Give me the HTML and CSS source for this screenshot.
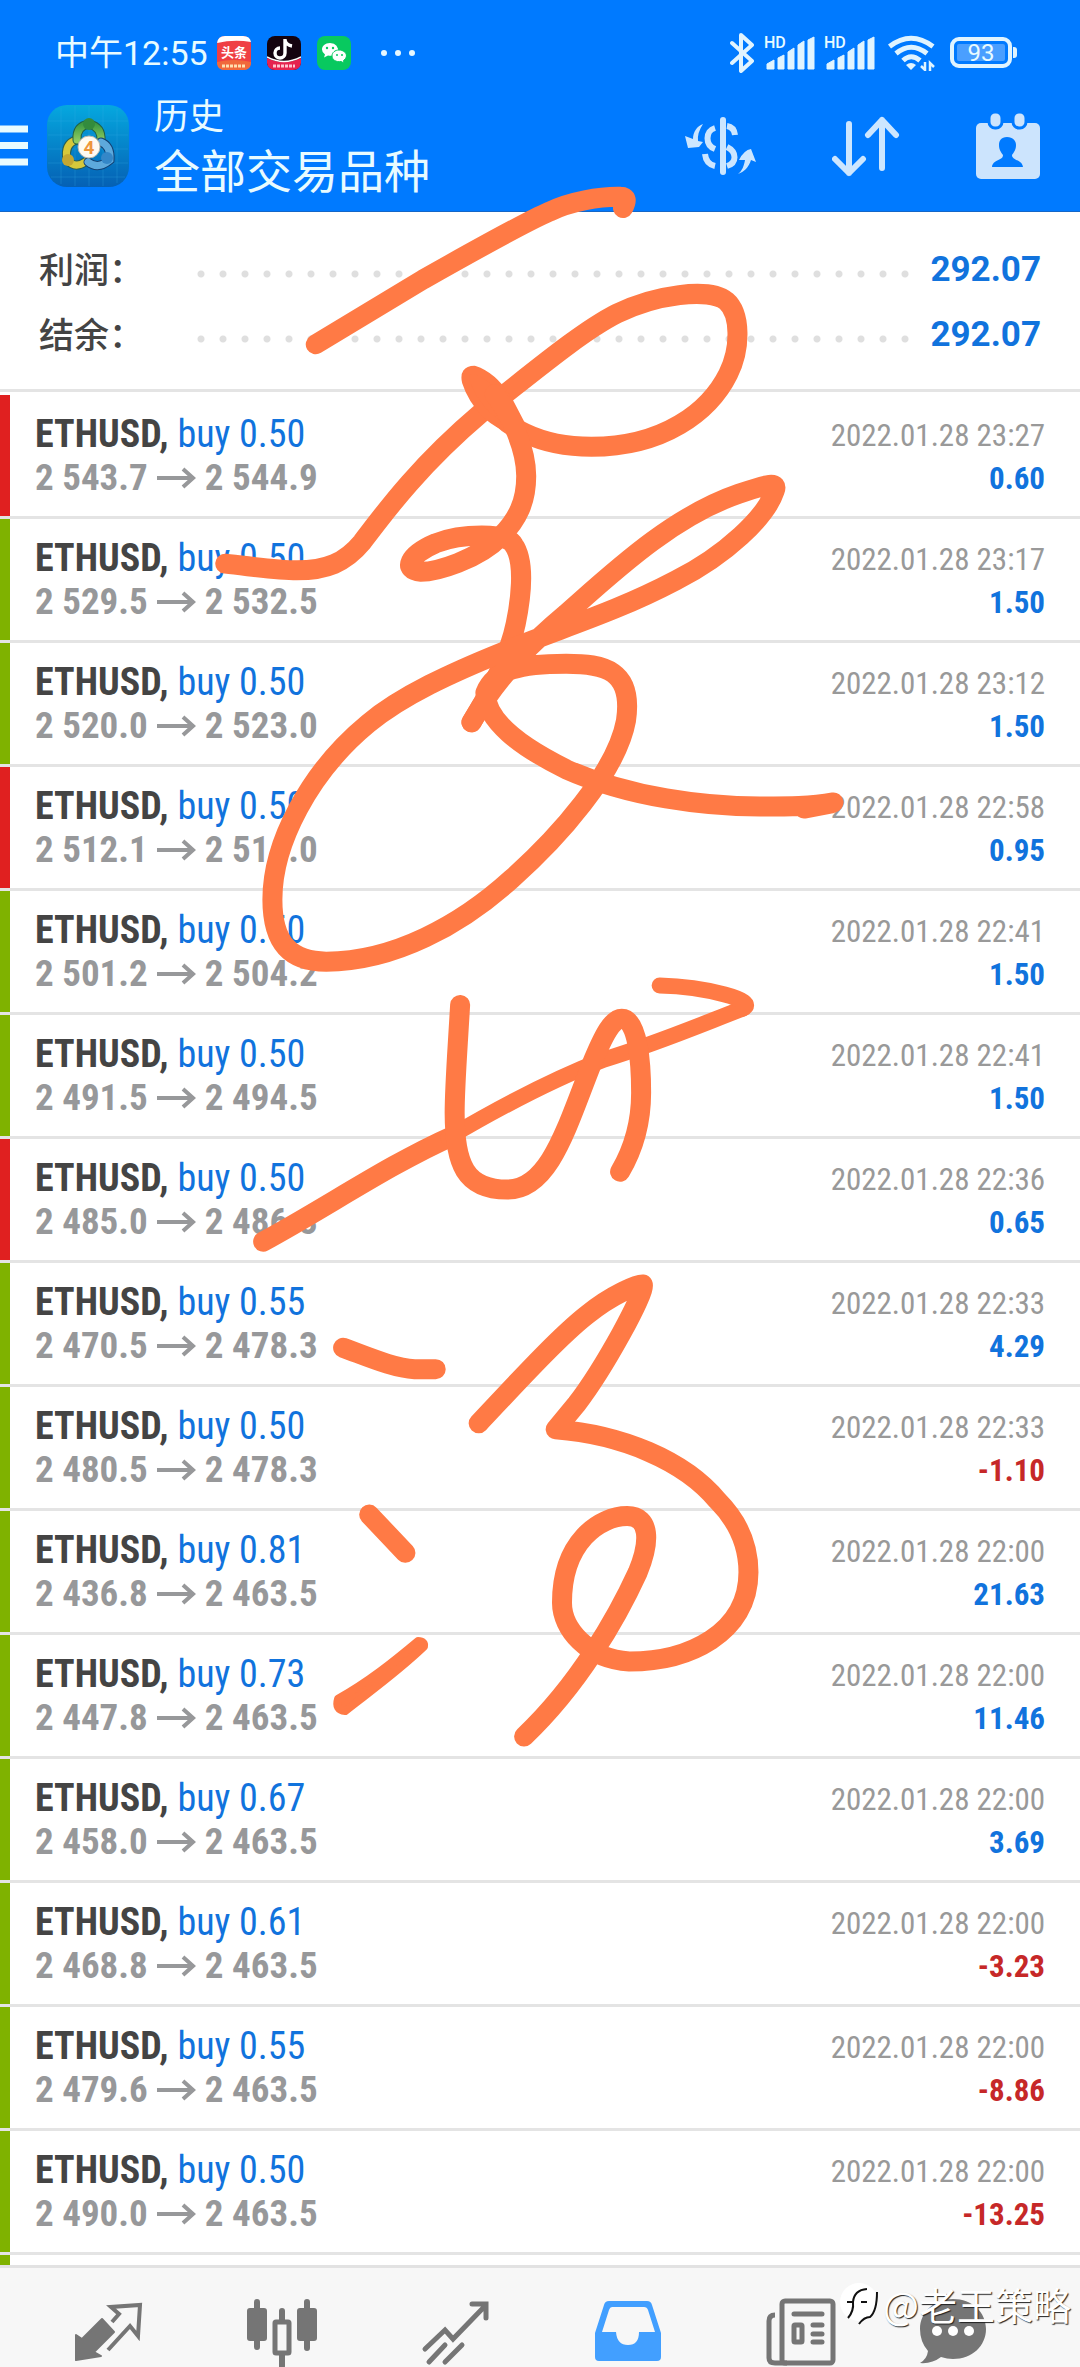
FILE: index.html
```html
<!DOCTYPE html>
<html lang="zh-CN">
<head>
    <meta charset="UTF-8">
    <title>历史</title>
    <meta name="viewport" content="width=device-width, initial-scale=1.0">
    <link rel="stylesheet" href="styles.css">
</head>
<body>
    <!-- Shared symbols -->
    <svg class="symbols" aria-hidden="true">
        <symbol id="arrow" viewBox="0 0 40 24">
            <path d="M1 12H37M27 3l10 9-10 9" fill="none" stroke="#97989a" stroke-width="4"/>
        </symbol>
        <symbol id="signal" viewBox="0 0 52 34">
            <path d="M3 34v-5l7-4v9zM14 34v-11l6-3v14zM24 34V17l6-4v21zM34 34V10l6-4v28zM44 34V5l6-3v32z" fill="#e0f4ff" stroke="#e0f4ff" stroke-width="1" stroke-linejoin="round" transform="translate(-1 -1)"/>
        </symbol>
    </svg>

    <!-- Top Bar -->
    <header class="top-bar">
        <div class="status">
            <time class="clock">中午12:55</time>
            <div class="notifications">
                <svg width="34" height="34" viewBox="0 0 34 34">
                    <rect width="34" height="34" rx="8" fill="#ef3f44"/>
                    <path d="M0 7Q1 0 8 0h18q7 0 8 6Q17 3 0 7z" fill="#fff"/>
                    <path d="M0 26q17-4 34 0v2q-1 6-8 6H8q-7 0-8-6z" fill="#f0693c"/>
                    <text x="17" y="21" class="toutiao">头条</text>
                    <path d="M5 30h24" stroke="#ffe0b0" stroke-width="3" stroke-dasharray="3 1"/>
                </svg>
                <svg width="34" height="34" viewBox="0 0 34 34">
                    <rect width="34" height="34" rx="8" fill="#14030f"/>
                    <path d="M0 22q17 8 34 0v5q-1 7-8 7H8q-7 0-8-7z" fill="#e5234f"/>
                    <path d="M0 21q17 9 34 0" fill="none" stroke="#fff" stroke-width="1.5"/>
                    <path d="M18 3v14a5 5 0 1 1-5-5M18 4q1 5 7 6" fill="none" stroke="#fff" stroke-width="3.4"/>
                    <path d="M6 30h22" stroke="#ffc4d0" stroke-width="3" stroke-dasharray="3 1"/>
                </svg>
                <svg width="34" height="34" viewBox="0 0 34 34">
                    <rect width="34" height="34" rx="8" fill="#08c95f"/>
                    <path d="M13 7c-5 0-8 3-8 6.500q0 3 3 5l-1 3 4-2q7 1 10-3 1-9-8-9.500z" fill="#fff"/>
                    <path d="M22 14c-4 0-7 2.500-7 6s4 6.500 9 5.500l3 1.500-.5-2.500q3-2 3-4.500c0-3.500-3.500-6-7.500-6z" fill="#fff" stroke="#08c95f"/>
                    <g fill="#08c95f"><circle cx="10" cy="12" r="1.200"/><circle cx="16" cy="12" r="1.200"/><circle cx="20" cy="19" r="1"/><circle cx="25" cy="19" r="1"/></g>
                </svg>
                <svg width="36" height="8" viewBox="0 0 36 8" class="more"><g fill="#e6f8ff"><circle cx="4" cy="4" r="3"/><circle cx="18" cy="4" r="3"/><circle cx="32" cy="4" r="3"/></g></svg>
            </div>
            <div class="system">
                <svg width="24" height="40" viewBox="0 0 24 40"><path d="M2 10l20 18-11 10V2l11 10L2 30" fill="none" stroke="#e0f4ff" stroke-width="4" stroke-linejoin="round" stroke-linecap="round"/></svg>
                <div class="signal"><svg width="52" height="34"><use href="#signal"/></svg><span class="hd">HD</span></div>
                <div class="signal"><svg width="52" height="34"><use href="#signal"/></svg><span class="hd">HD</span></div>
                <svg width="47" height="36" viewBox="0 0 47 36">
                    <g fill="none" stroke="#e0f4ff" stroke-width="5">
                        <path d="M1.500 11.500Q23 -5 45 11.500M8 18.500Q23 6 39 18.500M15 25.500Q23 18 32 25.500"/>
                    </g>
                    <path d="M18 30q5-4 10 0l-5 5z" fill="#e0f4ff"/>
                    <path d="M37 27v8l-4-4M42 36v-8l4 4" fill="none" stroke="#e0f4ff" stroke-width="2.500"/>
                </svg>
                <div class="battery">93</div>
            </div>
        </div>

        <div class="toolbar">
            <button class="menu" aria-label="菜单"><svg width="28" height="41" viewBox="0 0 28 41"><path d="M0 4h28M0 20.500h28M0 37h28" stroke="#e8fbff" stroke-width="7"/></svg></button>
            <svg class="app-logo" width="82" height="82" viewBox="0 0 82 82">
                <defs>
                    <linearGradient id="sky" x2="0" y2="1"><stop offset="0" stop-color="#05a8df"/><stop offset="1" stop-color="#0560b4"/></linearGradient>
                    <linearGradient id="green" x2="0" y2="1"><stop offset="0" stop-color="#3c9a42"/><stop offset="1" stop-color="#8fcc62"/></linearGradient>
                </defs>
                <rect width="82" height="82" rx="20" fill="url(#sky)"/>
                <path d="M14 3v76M28 1v80M42 1v80M56 1v80M70 4v74M1 16h80M1 30h80M1 44h80M1 58h80M4 72h74" stroke="#39b4e6" stroke-opacity=".25"/>
                <g fill="none" stroke-width="7" stroke-linecap="round">
                    <path d="M20 55Q17 39 29 35M20 55q8 9 18 2" stroke="#285f57" stroke-width="9"/>
                    <path d="M20 55Q17 39 29 35M20 55q8 9 18 2" stroke="#d6c83b"/>
                    <path d="M30 35Q29 21 42 19Q55 22 54 36" stroke="#215f45" stroke-width="9"/>
                    <path d="M30 35Q29 21 42 19Q55 22 54 36" stroke="url(#green)"/>
                    <path d="M54 37q10 4 9 18q-12 10-22 2" stroke="#123f71" stroke-width="9"/>
                    <path d="M54 37q10 4 9 18q-12 10-22 2" stroke="#5da9dc"/>
                </g>
                <circle cx="42" cy="19" r="6" fill="#338b3d"/>
                <circle cx="21" cy="55" r="6" fill="#c4a732"/>
                <circle cx="60" cy="53" r="6" fill="#3487c8"/>
                <circle cx="42" cy="42" r="11" fill="#fffaf2" stroke="#b8b7ae"/>
                <text x="42" y="49" class="logo-digit">4</text>
            </svg>
            <div class="titles">
                <div class="subtitle">历史</div>
                <h1>全部交易品种</h1>
            </div>
            <div class="actions">
                <button aria-label="货币">
                    <svg width="72" height="64" viewBox="0 0 72 64" fill="none" stroke="#cce6ff">
                        <path d="M39 6v52" stroke-width="6" stroke-linecap="round"/>
                        <path d="M31 14c-10 3-10 17 0 21M43 12q7 1 8 9M21 40q1 10 10 12M43 33c10 5 10 16 0 19" stroke-width="6"/>
                        <path d="M19 10C13 12 9 18 9 25l-8-3 3 12 11-1 4-5-5-1q-1-8 5-17zM54 60c4-3 6-8 7-14l-6 0q5-10 12-11l5 13-5-2c-2 7-7 12-13 14z" fill="#cce6ff" stroke="none"/>
                    </svg>
                </button>
                <button aria-label="排序">
                    <svg width="68" height="64" viewBox="0 0 68 64" fill="none" stroke="#cce6ff" stroke-width="6" stroke-linecap="round" stroke-linejoin="round"><path d="M17 10v49M3 45l14 14 14-14M50 54V6M36 21L50 6l14 15"/></svg>
                </button>
                <button aria-label="日期">
                    <svg width="64" height="66" viewBox="0 0 64 66">
                        <rect y="10" width="64" height="56" rx="5" fill="#cce4fd"/>
                        <g fill="#cce4fd" stroke="#007aff" stroke-width="3"><rect x="13" y="-1" width="13" height="16" rx="6"/><rect x="37" y="-1" width="13" height="16" rx="6"/></g>
                        <path d="M31 24c-6 0-8 4-8 8 0 5 2 7 4 10 0 6-10 4-11 12h31c-1-8-11-6-11-12 2-3 4-5 4-10 0-4-3-8-9-8z" fill="#007aff"/>
                    </svg>
                </button>
            </div>
        </div>
    </header>

    <!-- Totals -->
    <dl class="summary">
        <div class="total"><dt>利润：</dt><dd class="dots"></dd><dd class="sum">292.07</dd></div>
        <div class="total"><dt>结余：</dt><dd class="dots"></dd><dd class="sum">292.07</dd></div>
    </dl>

    <!-- Closed deals -->
    <ul class="deals">
        <li class="deal sl"><div><p class="name"><b>ETHUSD,</b> buy 0.50</p><p class="prices">2 543.7 <svg><use href="#arrow"/></svg> 2 544.9</p></div><div class="result"><p class="date">2022.01.28 23:27</p><p class="profit">0.60</p></div></li>
        <li class="deal"><div><p class="name"><b>ETHUSD,</b> buy 0.50</p><p class="prices">2 529.5 <svg><use href="#arrow"/></svg> 2 532.5</p></div><div class="result"><p class="date">2022.01.28 23:17</p><p class="profit">1.50</p></div></li>
        <li class="deal"><div><p class="name"><b>ETHUSD,</b> buy 0.50</p><p class="prices">2 520.0 <svg><use href="#arrow"/></svg> 2 523.0</p></div><div class="result"><p class="date">2022.01.28 23:12</p><p class="profit">1.50</p></div></li>
        <li class="deal sl"><div><p class="name"><b>ETHUSD,</b> buy 0.50</p><p class="prices">2 512.1 <svg><use href="#arrow"/></svg> 2 514.0</p></div><div class="result"><p class="date">2022.01.28 22:58</p><p class="profit">0.95</p></div></li>
        <li class="deal"><div><p class="name"><b>ETHUSD,</b> buy 0.50</p><p class="prices">2 501.2 <svg><use href="#arrow"/></svg> 2 504.2</p></div><div class="result"><p class="date">2022.01.28 22:41</p><p class="profit">1.50</p></div></li>
        <li class="deal"><div><p class="name"><b>ETHUSD,</b> buy 0.50</p><p class="prices">2 491.5 <svg><use href="#arrow"/></svg> 2 494.5</p></div><div class="result"><p class="date">2022.01.28 22:41</p><p class="profit">1.50</p></div></li>
        <li class="deal sl"><div><p class="name"><b>ETHUSD,</b> buy 0.50</p><p class="prices">2 485.0 <svg><use href="#arrow"/></svg> 2 486.3</p></div><div class="result"><p class="date">2022.01.28 22:36</p><p class="profit">0.65</p></div></li>
        <li class="deal"><div><p class="name"><b>ETHUSD,</b> buy 0.55</p><p class="prices">2 470.5 <svg><use href="#arrow"/></svg> 2 478.3</p></div><div class="result"><p class="date">2022.01.28 22:33</p><p class="profit">4.29</p></div></li>
        <li class="deal"><div><p class="name"><b>ETHUSD,</b> buy 0.50</p><p class="prices">2 480.5 <svg><use href="#arrow"/></svg> 2 478.3</p></div><div class="result"><p class="date">2022.01.28 22:33</p><p class="profit loss">-1.10</p></div></li>
        <li class="deal"><div><p class="name"><b>ETHUSD,</b> buy 0.81</p><p class="prices">2 436.8 <svg><use href="#arrow"/></svg> 2 463.5</p></div><div class="result"><p class="date">2022.01.28 22:00</p><p class="profit">21.63</p></div></li>
        <li class="deal"><div><p class="name"><b>ETHUSD,</b> buy 0.73</p><p class="prices">2 447.8 <svg><use href="#arrow"/></svg> 2 463.5</p></div><div class="result"><p class="date">2022.01.28 22:00</p><p class="profit">11.46</p></div></li>
        <li class="deal"><div><p class="name"><b>ETHUSD,</b> buy 0.67</p><p class="prices">2 458.0 <svg><use href="#arrow"/></svg> 2 463.5</p></div><div class="result"><p class="date">2022.01.28 22:00</p><p class="profit">3.69</p></div></li>
        <li class="deal"><div><p class="name"><b>ETHUSD,</b> buy 0.61</p><p class="prices">2 468.8 <svg><use href="#arrow"/></svg> 2 463.5</p></div><div class="result"><p class="date">2022.01.28 22:00</p><p class="profit loss">-3.23</p></div></li>
        <li class="deal"><div><p class="name"><b>ETHUSD,</b> buy 0.55</p><p class="prices">2 479.6 <svg><use href="#arrow"/></svg> 2 463.5</p></div><div class="result"><p class="date">2022.01.28 22:00</p><p class="profit loss">-8.86</p></div></li>
        <li class="deal"><div><p class="name"><b>ETHUSD,</b> buy 0.50</p><p class="prices">2 490.0 <svg><use href="#arrow"/></svg> 2 463.5</p></div><div class="result"><p class="date">2022.01.28 22:00</p><p class="profit loss">-13.25</p></div></li>
        <li class="deal"></li>
    </ul>

    <!-- Bottom tabs -->
    <nav class="tabs">
        <button aria-label="行情">
            <svg width="68" height="68" viewBox="0 0 68 68">
                <path d="M1 37l6 4 20-20 12 13-20 20 7 4-25 4z" fill="#757575" stroke="#757575" stroke-width="2" stroke-linejoin="round"/>
                <path d="M37 24l7-8-8-7 29-2-2 31-8-10-22 24" fill="none" stroke="#757575" stroke-width="4"/>
            </svg>
        </button>
        <button aria-label="图表">
            <svg width="70" height="70" viewBox="0 0 70 70">
                <path d="M10 4v45M60 4v46M35 13v12M35 54v14" stroke="#757575" stroke-width="6" stroke-linecap="round"/>
                <rect y="10" width="20" height="33" rx="3" fill="#757575"/><rect x="50" y="10" width="20" height="33" rx="3" fill="#757575"/>
                <rect x="28" y="24" width="14" height="31" rx="1" fill="#f7f7f7" stroke="#757575" stroke-width="5"/>
            </svg>
        </button>
        <button aria-label="交易">
            <svg width="68" height="68" viewBox="0 0 68 68" fill="none" stroke="#757575" stroke-width="5" stroke-linecap="round">
                <path d="M4 51l20-19 8 9L64 8M51 6h14v14"/><path d="M8 64l16-17M24 64l17-17"/>
            </svg>
        </button>
        <button aria-label="历史">
            <svg width="66" height="66" viewBox="0 0 66 66">
                <path d="M14 3h38q4 0 5 4l9 28v24q0 4-4 4H4q-4 0-4-4V35l9-28q1-4 5-4z" fill="#429fff"/>
                <path d="M17 9h32q3 0 4 3l7 22H44q0 13-11 13T21 34H7l7-22q1-3 3-3z" fill="#f7f7f7"/>
            </svg>
        </button>
        <button aria-label="新闻">
            <svg width="70" height="68" viewBox="0 0 70 68" fill="none" stroke="#757575" stroke-width="5">
                <rect x="16" y="3" width="51" height="62" rx="3"/>
                <path d="M9 17q-6 0-6 6v37q0 5 6 5h12"/>
                <path d="M28 16h28M47 27h9M47 36h9M47 44h9" stroke-linecap="round"/>
                <rect x="28" y="27" width="8" height="17" rx="1"/>
            </svg>
        </button>
        <button aria-label="消息">
            <svg width="66" height="68" viewBox="0 0 66 68">
                <path d="M33 1C14 1 0 14 0 31q0 13 8 22-1 8-8 12 12 1 21-6 6 2 12 2c19 0 33-13 33-30S52 1 33 1z" fill="#757575"/>
                <g fill="#fff"><circle cx="17" cy="33" r="5"/><circle cx="33" cy="33" r="5"/><circle cx="49" cy="33" r="5"/></g>
            </svg>
        </button>
        <div class="watermark">
            <svg width="40" height="44" viewBox="0 0 40 44">
                <circle cx="20" cy="20" r="19" fill="#fff"/>
                <path d="M9 36q6-7 5-16 1-12 14-13M8 20h6M22 20h6M38 10q0 19-7 25-6 0-11 7" fill="none" stroke="#111" stroke-width="2"/>
            </svg>
            <span>@老王策略</span>
        </div>
    </nav>

    <!-- Handwriting layer -->
    <svg class="ink" width="660" height="800" viewBox="0 0 1568 1568" preserveAspectRatio="none">
        <path d="M275 322L530 195C680 125 780 80 830 62C880 42 950 32 1000 33Q1020 33 1005 55"/>
        <path d="M60 752C120 757 180 765 230 765C300 765 345 750 385 710C440 650 520 560 670 455C780 385 900 300 990 262C1080 225 1210 210 1250 237C1285 262 1285 330 1255 380C1210 455 1100 523 930 523C800 523 720 480 690 440L650 390"/>
        <path class="blob" d="M632 396Q625 372 652 372Q700 385 735 435L770 490Q730 495 680 460Q645 430 632 396z"/>
        <path d="M700 420C740 460 775 530 775 580C775 630 755 665 715 698C660 745 560 768 525 768C480 765 495 735 560 712C620 693 730 690 745 715C775 750 760 830 750 870C735 930 700 990 645 1063"/>
        <path d="M645 1063C700 980 790 905 870 850C980 770 1120 660 1280 615C1350 595 1375 590 1365 610C1345 660 1250 735 1130 785C980 850 850 880 720 925C600 965 480 1010 400 1065C260 1160 172 1300 172 1410C172 1500 220 1532 300 1532C460 1532 620 1460 740 1370C850 1290 990 1160 1012 1060C1030 960 960 948 870 948C760 948 700 960 678 1005C680 1060 760 1110 870 1155C1020 1210 1200 1228 1330 1228C1400 1228 1450 1228 1505 1220M1435 1232L1500 1222"/>
    </svg>
    <svg class="ink lower" width="660" height="800" viewBox="0 0 1568 1568" preserveAspectRatio="none">
        <path d="M150 552C300 485 450 400 600 345"/>
        <path class="thin" d="M590 348C740 275 850 230 960 195C1080 165 1180 130 1290 95"/>
        <path class="thin" d="M1290 95C1330 80 1200 52 1092 50"/>
        <path d="M618 88C610 200 605 250 605 300C605 400 630 450 730 450C830 450 870 330 930 205C960 145 980 115 1002 115C1040 115 1048 200 1048 260C1048 320 1030 370 998 415"/>
        <path d="M662 908C740 840 850 740 920 695C980 655 1040 635 1052 636C1060 650 960 800 895 870L845 920C1000 930 1150 980 1230 1060C1290 1110 1303 1160 1303 1200C1303 1320 1160 1375 1020 1375C920 1370 860 1310 860 1260C860 1140 950 1090 1015 1090C1070 1090 1070 1140 1040 1200C990 1290 900 1420 770 1522"/>
        <path d="M340 760C400 778 460 800 510 802H560M402 1087L488 1162"/>
        <path class="blob" d="M328 1448C400 1415 460 1375 518 1335Q535 1335 532 1346C470 1395 410 1430 345 1472Q320 1470 328 1448z"/>
    </svg>
</body>
</html>
```

FILE: styles.css
```css
* {
    box-sizing: border-box;
}
body {
    font-family: Roboto, "Noto Sans CJK SC", sans-serif;
    margin: 0;
    height: 100vh;
    overflow: hidden;
    position: relative;
    display: flex;
    flex-direction: column;
    background-color: #fff;
}
h1, p, dl, dd, ul {
    margin: 0;
    padding: 0;
}
button {
    background: none;
    border: none;
    padding: 0;
    cursor: pointer;
}
svg {
    display: block;
    flex: none;
}
.symbols {
    position: absolute;
    width: 0;
    height: 0;
}

/* Top bar */
.top-bar {
    background-color: #007aff;
    border-bottom: 1px solid #1467c8;
    color: #e8fbff;
    flex: none;
}
.status {
    display: flex;
    align-items: center;
    height: 92px;
    padding: 13px 68px 0 55px;
}
.clock {
    font-size: 34px;
    line-height: 40px;
}
.notifications {
    display: flex;
    align-items: center;
    gap: 16px;
    margin-left: 9px;
}
.more {
    margin-left: 13px;
}
.toutiao {
    font-size: 13px;
    font-weight: bold;
    fill: #fff;
    text-anchor: middle;
}
.system {
    display: flex;
    align-items: center;
    gap: 11px;
    margin-left: auto;
}
.signal {
    position: relative;
}
.signal + .signal {
    margin-left: -3px;
}
.hd {
    position: absolute;
    top: -1px;
    left: -1px;
    font-size: 16px;
    line-height: 16px;
    font-weight: 500;
}
.battery {
    position: relative;
    width: 62px;
    height: 31px;
    margin-left: 4px;
    border: 4px solid #e0f4ff;
    border-radius: 9px;
    background: #4a9fff;
    background-clip: content-box;
    padding: 3px;
    font-size: 24px;
    line-height: 18px;
    text-align: center;
}
.battery::after {
    content: "";
    position: absolute;
    top: 6px;
    right: -9px;
    width: 4px;
    height: 11px;
    border-radius: 0 3px 3px 0;
    background: #e0f4ff;
}
.toolbar {
    display: flex;
    align-items: center;
    height: 119px;
    padding: 0 40px 12px 0;
}
.app-logo {
    margin-left: 19px;
}
.logo-digit {
    font-size: 19px;
    font-weight: bold;
    fill: #ee963c;
    text-anchor: middle;
}
.titles {
    margin-left: 25px;
}
.subtitle {
    font-size: 35px;
    line-height: 52px;
}
h1 {
    font-size: 46px;
    line-height: 56px;
    font-weight: 400;
}
.actions {
    display: flex;
    align-items: center;
    gap: 76px;
    margin-left: auto;
}

/* Totals */
.summary {
    padding: 24px 39px 23px;
    border-bottom: 3px solid #e4e4e4;
    flex: none;
}
.total {
    display: flex;
    align-items: center;
    height: 65px;
}
.total dt {
    width: 151px;
    color: #444;
    font-family: "Noto Sans CJK SC", sans-serif;
    font-size: 35px;
    line-height: 40px;
    font-weight: 500;
    padding-bottom: 2px;
}
.dots {
    flex: 1;
    height: 8px;
    margin-top: 10px;
    background: radial-gradient(circle, #dfdfdf 3px, transparent 4px) 0 0 / 22px 8px;
}
.sum {
    width: 124px;
    padding-top: 2px;
    color: #1173dd;
    font-size: 35px;
    font-weight: bold;
    text-align: right;
}

/* Deals */
.deals {
    flex: 1;
    min-height: 0;
    overflow: hidden;
    padding-top: 3px;
    list-style: none;
    font-family: "Roboto Condensed", "Liberation Sans Narrow", Roboto, sans-serif;
}
.deal {
    display: flex;
    justify-content: space-between;
    height: 124px;
    padding: 18px 35px 0;
    border-bottom: 3px solid #e4e4e4;
    box-shadow: inset 10px 0 0 #7fb200;
}
.deal.sl {
    box-shadow: inset 10px 0 0 #e02020;
}
.name, .prices {
    font-size: 38px;
    line-height: 43px;
    white-space: nowrap;
}
.name {
    color: #1173dd;
}
.name b {
    color: #444;
}
.prices {
    color: #97989a;
    font-size: 37px;
    font-weight: bold;
}
.prices svg {
    display: inline-block;
    width: 40px;
    height: 24px;
}
.result {
    padding-top: 1px;
}
.date, .profit {
    font-size: 31px;
    line-height: 43px;
    text-align: right;
}
.date {
    color: #999;
}
.profit {
    color: #1173dd;
    font-weight: bold;
}
.loss {
    color: #c62828;
}

/* Bottom tabs */
.tabs {
    position: relative;
    display: grid;
    grid-template-columns: repeat(5, 1fr) 132px;
    justify-items: center;
    align-items: start;
    height: 102px;
    padding: 30px 61px 0 22px;
    border-top: 3px solid #e2e2e2;
    background-color: #f7f7f7;
    flex: none;
}
.watermark {
    position: absolute;
    right: 9px;
    top: 14px;
    display: flex;
    align-items: center;
    gap: 4px;
    color: #fff;
    font-family: "Noto Sans CJK SC", sans-serif;
    font-size: 38px;
    line-height: 40px;
    text-shadow: 1px 1px 1px #222;
}

/* Handwriting */
.ink {
    position: absolute;
    left: 200px;
    top: 180px;
    fill: none;
    stroke: #ff7a45;
    stroke-width: 20px;
    stroke-linecap: round;
    stroke-linejoin: round;
    pointer-events: none;
}
.ink.lower {
    top: 960px;
}
.ink path {
    vector-effect: non-scaling-stroke;
}
.ink .thin {
    stroke-width: 16px;
}
.ink .blob {
    fill: #ff7a45;
    stroke-width: 8px;
}
```
